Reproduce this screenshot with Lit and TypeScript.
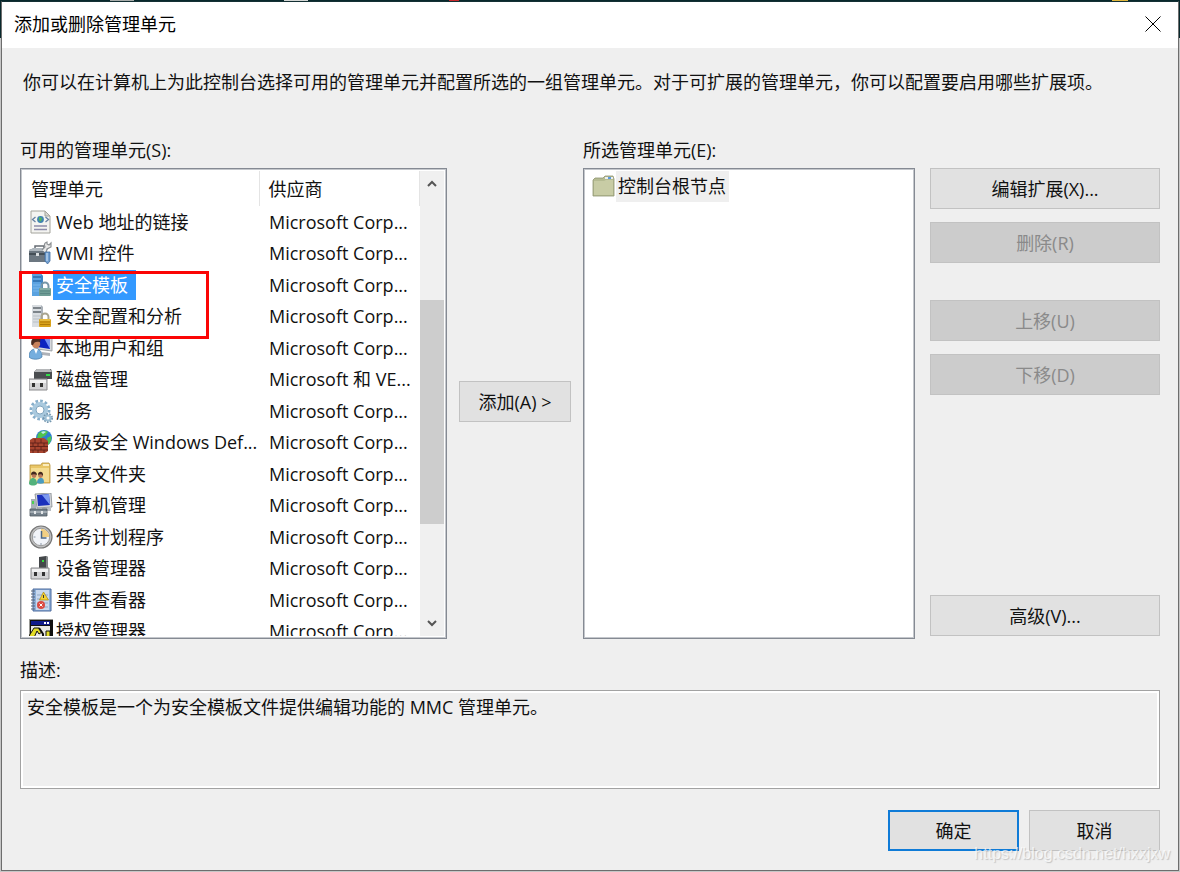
import { LitElement, html, css, svg, nothing } from "lit";
import { customElement, property } from "lit/decorators.js";
import { classMap } from "lit/directives/class-map.js";

const server = (tint: boolean) => svg`
  <path d="M3 1h9l2 2v20H3z" fill=${tint ? "#5aa2e0" : "#d9dde1"}/>
  <path d="M12 1l2 2v20h-2z" fill=${tint ? "#3f84c2" : "#aab1b8"}/>
  <path d="M4 4h8M4 8h8" stroke=${tint ? "#2a6cab" : "#5f676e"} stroke-width="1.4"/>
  <path d="M4 12h8M4 15h8M4 18h8" stroke=${tint ? "#7ab8ec" : "#b9bfc5"}/>
  <path d="M12.5 16v-3a3.500 3.500 0 0 1 7 0v3" fill="none" stroke=${tint ? "#7697a8" : "#a8a48f"} stroke-width="2"/>
  <rect x="10" y="15" width="12" height="8" rx="1" fill=${tint ? "#6f9d95" : "#d9a21a"}/>
  <path d="M11 18h10M11 20.5h10" stroke=${tint ? "#5b8784" : "#b07b08"}/>
  <path d="M11 16h10" stroke=${tint ? "#9cc0b6" : "#f6d667"}/>`;

const plug = svg`
  <path d="M2 12h18v11H2z" fill="#d4d4d6" stroke="#8b8b8e"/>
  <path d="M3 13h16v3H3z" fill="#f1f1f2"/>
  <path d="M5 16h3v4H5zM13 16h3v4h-3z" fill="#333"/>`;

const art: Record<string, unknown> = {
  web: svg`
    <path d="M2 1h14l5 5v17H2z" fill="#f4f4f1" stroke="#a4a49c"/>
    <path d="M16 1v5h5z" fill="#d8d8d2" stroke="#a4a49c"/>
    <path d="M6.500 7L3.500 9.500l3 2.500M16.500 7l3 2.500-3 2.500" fill="none" stroke="#6782a3" stroke-width="1.300"/>
    <circle cx="11.500" cy="9.500" r="3.400" fill="#3f84b0"/><path d="M10 7l3 1-1 3.500-2-1z" fill="#58b85a"/>
    <path d="M5 16h13M5 19.500h13" stroke="#8d8cab" stroke-width="1.300"/>`,
  wmi: svg`
    <path d="M6 8V5h9v3" fill="none" stroke="#656c73" stroke-width="1.500"/>
    <path d="M0 9l5-2h15l-3 3v11H0z" fill="#6c7781"/><path d="M0 9l5-2h15l-3 3H0z" fill="#b0b8bf"/>
    <path d="M0 13h16" stroke="#39424a" stroke-width="1.500"/><path d="M7 12h3v3H7z" fill="#d9dde0"/>
    <path d="M17 12l1-4 4-2V2l-2 2-2-1V1c-3 1-3 3-2 5l-3 3" fill="#e8e8e8" stroke="#8d9194" stroke-width="1.200"/>
    <path d="M16 11h5v9l-2.500 3-2.500-3z" fill="#6f9ed0" stroke="#426c9e" stroke-width=".8"/>
    <path d="M18 12v8" stroke="#d5e6f7"/>`,
  template: server(true),
  security: server(false),
  users: svg`
    <path d="M7 1l16-1v15l-15-2z" fill="#d7d9dc" stroke="#8e9398" stroke-width=".8"/>
    <path d="M8 2l13-1v12L8 11z" fill="#0c22c0"/><path d="M15 2l6-1v12z" fill="#7290f0"/>
    <path d="M13 16l8 1v3l-8-1z" fill="#aeb2b8"/>
    <path d="M0 21c0-6 3-8 7-8s6 3 6 8c-3 3-10 3-13 0z" fill="#75aede" stroke="#4278a8" stroke-width=".7"/>
    <path d="M5 13l2 5 2-5z" fill="#fff"/>
    <circle cx="7" cy="8" r="4.200" fill="#c9835c"/><path d="M2.500 9C1 3 5 1 8 2c3 0 4 2 3 4-4-1-6 0-7 3z" fill="#4d2c20"/>`,
  disk: svg`
    <path d="M5 5l3-3h14l1 3v7H5z" fill="#4a4d50"/><path d="M5 5l3-3h13l2 3z" fill="#b5b7b9"/>
    <path d="M17 8h4" stroke="#31dc49" stroke-width="2"/>
    <path d="M0 12h18v11H0z" fill="#d4d4d6" stroke="#8b8b8e"/><path d="M1 13h16v3H1z" fill="#f1f1f2"/>
    <path d="M3 16h3v4H3zM11 16h3v4h-3z" fill="#333"/>`,
  services: svg`
    <circle cx="11" cy="11" r="9" fill="none" stroke="#86aeca" stroke-width="3" stroke-dasharray="2.600 2.100"/>
    <circle cx="11" cy="11" r="6" fill="none" stroke="#a9c9de" stroke-width="4"/>
    <circle cx="11" cy="11" r="4" fill="#fff" stroke="#7ea4be"/>
    <circle cx="19" cy="19" r="4" fill="none" stroke="#7496ae" stroke-width="2" stroke-dasharray="1.600 1.200"/>
    <circle cx="19" cy="19" r="2.500" fill="#fff" stroke="#9dbfd5" stroke-width="2"/>`,
  firewall: svg`
    <circle cx="15" cy="8" r="8" fill="#2f7fd0"/>
    <path d="M9 4c3-4 8-4 10-2l-3 4-3 1-2 4-3-2zM18 8l4-2c1 4-1 7-3 9z" fill="#4fc34c"/>
    <path d="M12 2c2-1 4-1 5 0l-3 2z" fill="#bfe8f6"/>
    <path d="M1 10l3-2h11l4 3v10l-3 2H1z" fill="#a8452f"/>
    <path d="M1 13h18M1 16.500h18M1 20h18M6 9v4M12 9v4M4 13v3.500M9 13v3.500M15 13v3.500M6 16.500V20M12 16.500V20M4 20v3M9 20v3M15 20v3" stroke="#5f2018" stroke-width=".9"/>`,
  share: svg`
    <path d="M1 3h11l1-2h7l1 2v18H1z" fill="#e9c667" stroke="#b8923c" stroke-width=".8"/>
    <path d="M14 3h6" stroke="#fff8dc" stroke-width="1.500"/><path d="M2 6h18v14H2z" fill="#f4dc91"/>
    <path d="M0 22c0-4 2-6 4-6s4 2 4 6c-2 2-6 2-8 0z" fill="#52b27c"/>
    <path d="M8 21c0-4 2-5 4-5s3 1 3 5c-2 1-5 1-7 0z" fill="#4a9cc0"/>
    <circle cx="5" cy="13.500" r="2.400" fill="#b9795a"/><circle cx="11.500" cy="13.500" r="2.400" fill="#b9795a"/>
    <path d="M2 13c0-5 6-4 6 0-2-1-4-1-6 0zM9 13c0-5 6-4 5 1-1-2-3-2-5-1z" fill="#43291f"/>`,
  computer: svg`
    <path d="M6 1l16-1 1 14-15 1z" fill="#d5d7da" stroke="#83888d" stroke-width=".8"/>
    <path d="M8 2l12-1 1 11-12 1z" fill="#1b30bc"/><path d="M13 2l7-1 1 11z" fill="#7d9af0"/>
    <path d="M2 6h5v11H2z" fill="#a9b1b7"/><path d="M3 8h2v3H3z" fill="#4bd250"/>
    <path d="M13 15h9v3h-9z" fill="#babec3"/>
    <path d="M1 16h17v7H1z" fill="#75818b" stroke="#4e5961" stroke-width=".8"/>
    <path d="M1 19h17" stroke="#cbd1d5"/><path d="M5 18h2v3H5zM12 18h2v3h-2z" fill="#e4e7e9"/>`,
  task: svg`
    <circle cx="12" cy="12" r="11" fill="#bfc0c1" stroke="#777" stroke-width="1.200"/>
    <circle cx="12" cy="12" r="8.700" fill="#f1f4f9" stroke="#999"/>
    <path d="M12 12V3.800a8.200 8.200 0 0 1 8.200 8.200z" fill="#f2cf82"/>
    <path d="M12.500 6v7h5" fill="none" stroke="#4e6784" stroke-width="1.500"/>
    <path d="M12 18v2M4.500 12h2" stroke="#8b98a8"/>`,
  device: svg`
    <path d="M10 1l7-1 2 1v12h-9z" fill="#44474a"/><path d="M17 0l2 1v12h-2z" fill="#85888b"/>
    <path d="M13 4h2v2h-2z" fill="#35dd3d"/>${plug}`,
  event: svg`
    <path d="M4 1h18v22H4z" fill="#8eb0d9" stroke="#4c6b9d"/><path d="M7 2h13v20H7z" fill="#c8d8ee"/>
    <path d="M8 7h11M8 11h11M8 15h11M8 19h11" stroke="#91a9c7"/>
    <path d="M2 3h4M2 6h4M2 9h4M2 12h4M2 15h4M2 18h4M2 21h4" stroke="#566478" stroke-width="1.200"/>
    <path d="M14.500 4l5 8h-9z" fill="#f5d334" stroke="#aa8611" stroke-width=".7"/><path d="M14.500 7v3" stroke="#333"/>
    <circle cx="12" cy="17" r="4" fill="#db4a42"/><path d="M10.500 15.500l3 3m0-3l-3 3" stroke="#fff"/>`,
  auth: svg`
    <path d="M0 0h24v24H0z" fill="#9a9a96"/><path d="M1 1h23v23H1z" fill="#111"/>
    <path d="M2 2h19v4H2z" fill="#101b8a"/><path d="M15 3h2v2h-2zM18 3h2v2h-2z" fill="#fff"/>
    <path d="M2 7h19v15H2z" fill="#e8e8e4"/>
    <path d="M0 17l5-8h5l3 4-3 2-2-3-4 9H0z" fill="#e3dd28" stroke="#111"/>
    <path d="M17 12h4v8h-4z" fill="#e3dd28" stroke="#111"/><path d="M10 9l4 6v8" fill="none" stroke="#111" stroke-width="2"/>`,
  folder: svg`
    <path d="M1 5l2-2h8l2-2h8l1 3v17H1z" fill="#b5bb92" stroke="#8f9471" stroke-width=".8"/>
    <path d="M2 6h10l2-1h7v15H2z" fill="#c8cca5"/><path d="M13 2h8v2h-8z" fill="#edf1f0"/><path d="M16 2h3v2h-3z" fill="#5a9bdd"/>`,
};

@customElement("snapin-icon")
class SnapinIcon extends LitElement {
  @property() name = "";
  static styles = css`
    :host { display: block; flex: none; width: 24px; height: 24px; }
    .art { display: block; width: 100%; height: 100%; }
  `;
  render() {
    return html`<svg class="art" viewBox="0 0 24 24" aria-hidden="true">${art[this.name] ?? nothing}</svg>`;
  }
}

interface Snapin { icon: string; name: string; vendor: string; selected?: boolean; }
const corp = "Microsoft Corp...";
const snapins: Snapin[] = [
  { icon: "web", name: "Web 地址的链接", vendor: corp },
  { icon: "wmi", name: "WMI 控件", vendor: corp },
  { icon: "template", name: "安全模板", vendor: corp, selected: true },
  { icon: "security", name: "安全配置和分析", vendor: corp },
  { icon: "users", name: "本地用户和组", vendor: corp },
  { icon: "disk", name: "磁盘管理", vendor: "Microsoft 和 VE..." },
  { icon: "services", name: "服务", vendor: corp },
  { icon: "firewall", name: "高级安全 Windows Def...", vendor: corp },
  { icon: "share", name: "共享文件夹", vendor: corp },
  { icon: "computer", name: "计算机管理", vendor: corp },
  { icon: "task", name: "任务计划程序", vendor: corp },
  { icon: "device", name: "设备管理器", vendor: corp },
  { icon: "event", name: "事件查看器", vendor: corp },
  { icon: "auth", name: "授权管理器", vendor: corp },
];

@customElement("app-root")
class AppRoot extends LitElement {
  static styles = css`
    * { box-sizing: border-box; }
    :host {
      display: flex; position: relative; box-sizing: border-box; min-height: 100vh; padding: 1px;
      font: 18px/24px "Open Sans", "Noto Sans CJK SC", sans-serif; color: #111;
      background:
        linear-gradient(#a9adab, #a9adab) 110px 0 / 24px 1px no-repeat,
        linear-gradient(#d5d8d6, #d5d8d6) 284px 0 / 24px 1px no-repeat,
        linear-gradient(#c8282c, #c8282c) 449px 0 / 10px 1px no-repeat,
        linear-gradient(#e0b73c, #e0b73c) 1112px 0 / 16px 1px no-repeat,
        linear-gradient(#08282c 38px, #c6c6c6 38px);
    }
    .dialog { flex: 1; min-width: 0; display: flex; flex-direction: column; background: #efefef; border: 1px solid #6d6d6d; border-top-color: #143034; }
    .titlebar { display: flex; align-items: center; justify-content: space-between; height: 46px; padding: 0 13px 2px 12px; background: #fff; color: #000; }
    .title { margin: 0; font-size: 18px; font-weight: 400; }
    .close { display: grid; place-items: center; width: 24px; height: 24px; padding: 0; border: 0; background: none; }
    .cross { width: 16px; height: 16px; }
    .content { flex: 1; display: flex; flex-direction: column; padding: 22px 18px 19px; }
    .intro { margin: 0 2px 44px 3px; }
    .main { flex: 1; display: grid; grid-template-columns: minmax(0, 427fr) 112px minmax(0, 332fr) 233px; grid-template-rows: 30px minmax(471px, 1fr); column-gap: 12px; }
    .label { display: block; }
    .label.right { grid-column: 3 / 5; }
    .label.left { grid-column: 1 / 3; }
    .frame { background: #fff; border: 1px solid #858a93; box-shadow: inset 0 0 0 1px #c4c7cc; }
    .available { position: relative; display: flex; justify-content: space-between; height: 471px; padding: 2px; }
    .viewport { flex: 1; min-width: 0; overflow: hidden; }
    .table { width: 100%; table-layout: fixed; border-collapse: collapse; }
    .head { height: 35px; padding: 0 0 0 9px; text-align: left; font-weight: 400; border-right: 1px solid #e4e4e4; }
    .first { width: 236px; padding-left: 8px; }
    .row { height: 31px; }
    .row:nth-child(even) { height: 32px; }
    .cell { padding: 0 0 0 6px; white-space: nowrap; }
    .vendor { padding: 0 0 0 10px; white-space: nowrap; }
    .entry { display: flex; align-items: center; height: 30px; }
    .name { height: 30px; line-height: 30px; padding: 0 8px 0 3px; }
    .name.selected { background: #3399ff; color: #fff; }
    .scroll { display: flex; flex-direction: column; width: 24px; background: #f0f0f0; }
    .arrow { height: 26px; padding: 0; border: 0; background: none; display: grid; place-items: center; }
    .chevron { width: 10px; height: 8px; }
    .track { flex: 1; display: flex; flex-direction: column; padding: 103px 0 86px; }
    .thumb { flex: 1; background: #cdcdcd; }
    .mark { position: absolute; left: -2px; top: 102px; width: 190px; height: 68px; border: 3px solid #fb0505; pointer-events: none; }
    .button { height: 41px; padding: 0; border: 1px solid #c2c2c2; background: #e1e1e1; color: #111; font: inherit; }
    .button:disabled { background: #ccc; border-color: #c2c2c2; color: #8a8a8a; }
    .add { margin-top: 213px; }
    .chosen { padding: 2px 8px; }
    .node { display: flex; align-items: center; height: 31px; }
    .node-name { height: 31px; line-height: 31px; padding: 0 3px 0 2px; background: #efefef; }
    .side { display: flex; flex-direction: column; gap: 13px; padding: 0 0 3px 3px; }
    .move { margin-top: 24px; }
    .advanced { margin-top: auto; }
    .desc-label { margin: 19px 0 8px; }
    .desc { display: block; width: 100%; height: 99px; padding: 4px 6px; margin: 0; resize: none; overflow: hidden; border: 1px solid #a2a2a2; outline: 0; border-radius: 0; background: #efefef; box-shadow: inset 0 0 0 2px #fff; color: #111; font: inherit; }
    .actions { display: flex; justify-content: flex-end; gap: 10px; margin-top: 21px; }
    .action { width: 131px; }
    .primary { border: 2px solid #0f7bd7; }
    .watermark { position: absolute; right: 10px; bottom: 6px; color: rgba(255, 255, 255, .7); text-shadow: 1px 1px 1px rgba(130, 130, 130, .4); font: 16px/24px "Liberation Sans", sans-serif; }
  `;

  private chevron(d: string) {
    return html`<svg class="chevron" viewBox="0 0 10 8" aria-hidden="true"><path d=${d} fill="none" stroke="#555" stroke-width="2"/></svg>`;
  }

  render() {
    return html`
      <section class="dialog" role="dialog" aria-labelledby="title">
        <header class="titlebar">
          <h1 class="title" id="title">添加或删除管理单元</h1>
          <button class="close" aria-label="关闭">
            <svg class="cross" viewBox="0 0 16 16" aria-hidden="true"><path d="M.5.5l15 15m0-15l-15 15" stroke="#000"/></svg>
          </button>
        </header>
        <div class="content">
          <p class="intro">你可以在计算机上为此控制台选择可用的管理单元并配置所选的一组管理单元。对于可扩展的管理单元，你可以配置要启用哪些扩展项。</p>
          <div class="main">
            <span class="label left" id="available">可用的管理单元(S):</span>
            <span class="label right" id="chosen">所选管理单元(E):</span>
            <div class="frame available">
              <div class="viewport">
                <table class="table" aria-labelledby="available">
                  <thead><tr><th class="head first">管理单元</th><th class="head">供应商</th></tr></thead>
                  <tbody>
                    ${snapins.map((s) => html`<tr class="row">
                      <td class="cell"><div class="entry"><snapin-icon name=${s.icon}></snapin-icon><span class=${classMap({ name: true, selected: !!s.selected })}>${s.name}</span></div></td>
                      <td class="vendor">${s.vendor}</td>
                    </tr>`)}
                  </tbody>
                </table>
              </div>
              <div class="scroll">
                <button class="arrow" aria-label="向上滚动">${this.chevron("M1 6l4-4 4 4")}</button>
                <div class="track"><div class="thumb"></div></div>
                <button class="arrow" aria-label="向下滚动">${this.chevron("M1 2l4 4 4-4")}</button>
              </div>
              <div class="mark"></div>
            </div>
            <button class="button add">添加(A) &gt;</button>
            <div class="frame chosen" role="tree" aria-labelledby="chosen">
              <div class="node" role="treeitem"><snapin-icon name="folder"></snapin-icon><span class="node-name">控制台根节点</span></div>
            </div>
            <div class="side">
              <button class="button">编辑扩展(X)...</button>
              <button class="button" disabled>删除(R)</button>
              <button class="button move" disabled>上移(U)</button>
              <button class="button" disabled>下移(D)</button>
              <button class="button advanced">高级(V)...</button>
            </div>
          </div>
          <label class="label desc-label" for="desc">描述:</label>
          <textarea class="desc" id="desc" readonly .value=${"安全模板是一个为安全模板文件提供编辑功能的 MMC 管理单元。"}></textarea>
          <div class="actions">
            <button class="button action primary">确定</button>
            <button class="button action">取消</button>
          </div>
        </div>
      </section>
      <span class="watermark">https://blog.csdn.net/hxxjxw</span>
    `;
  }
}
